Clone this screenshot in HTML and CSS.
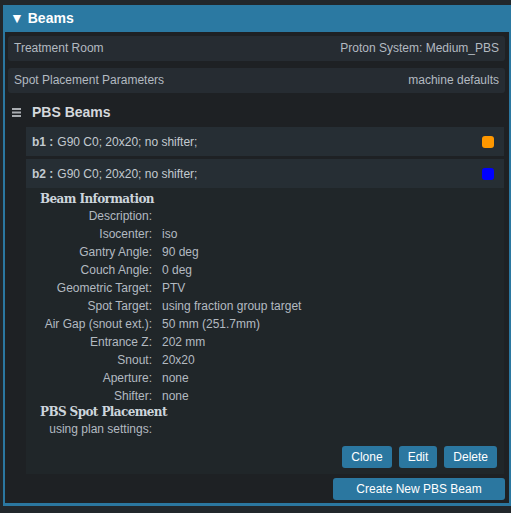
FILE: index.html
```html
<!DOCTYPE html>
<html lang="en">
<head>
    <meta charset="UTF-8">
    <title>Beams</title>
    <link rel="stylesheet" href="styles.css">
</head>
<body>
    <div class="panel">
        <div class="panel-header"><span class="caret">&#9660;</span> Beams</div>
        <div class="panel-body">
            <div class="info-row">
                <span>Treatment Room</span>
                <span>Proton System: Medium_PBS</span>
            </div>
            <div class="info-row">
                <span>Spot Placement Parameters</span>
                <span>machine defaults</span>
            </div>

            <div class="section-title">
                <svg class="menu-icon" width="9" height="9" viewBox="0 0 9 9">
                    <rect x="0" y="0" width="9" height="2" fill="#a9adb1"/>
                    <rect x="0" y="3.5" width="9" height="2" fill="#a9adb1"/>
                    <rect x="0" y="7" width="9" height="2" fill="#a9adb1"/>
                </svg>
                PBS Beams
            </div>

            <div class="beam-list">
                <div class="beam">
                    <span class="beam-id">b1 :</span>
                    <span class="beam-desc">G90 C0; 20x20; no shifter;</span>
                    <span class="swatch orange"></span>
                </div>
                <div class="beam">
                    <span class="beam-id">b2 :</span>
                    <span class="beam-desc">G90 C0; 20x20; no shifter;</span>
                    <span class="swatch blue"></span>
                </div>
                <div class="beam-details">
                    <h4>Beam Information</h4>
                    <div class="props">
                        <span class="label">Description:</span><span></span>
                        <span class="label">Isocenter:</span><span>iso</span>
                        <span class="label">Gantry Angle:</span><span>90 deg</span>
                        <span class="label">Couch Angle:</span><span>0 deg</span>
                        <span class="label">Geometric Target:</span><span>PTV</span>
                        <span class="label">Spot Target:</span><span>using fraction group target</span>
                        <span class="label">Air Gap (snout ext.):</span><span>50 mm (251.7mm)</span>
                        <span class="label">Entrance Z:</span><span>202 mm</span>
                        <span class="label">Snout:</span><span>20x20</span>
                        <span class="label">Aperture:</span><span>none</span>
                        <span class="label">Shifter:</span><span>none</span>
                    </div>
                    <h4>PBS Spot Placement</h4>
                    <div class="props">
                        <span class="label">using plan settings:</span><span></span>
                    </div>
                    <div class="actions">
                        <button>Clone</button>
                        <button>Edit</button>
                        <button>Delete</button>
                    </div>
                </div>
            </div>

            <div class="footer">
                <button class="wide">Create New PBS Beam</button>
            </div>
        </div>
    </div>
</body>
</html>
```

FILE: styles.css
```css
/* Page */
body {
    margin: 0;
    padding-top: 5px;
    background-color: #22272b;
    font-family: 'Liberation Sans', Arial, sans-serif;
    font-size: 12px;
    color: #b3bac1;
}

.panel {
    margin-left: 3px;
    width: 504px;
    border: 2px solid #2b77a0;
    border-top: none;
    border-bottom-width: 3px;
    background-color: #1e2124;
}

.panel-header {
    height: 27px;
    line-height: 27px;
    margin: 0 -2px;
    padding-left: 7px;
    background-color: #2b79a2;
    color: #fff;
    font-size: 14px;
    font-weight: bold;
}

.caret {
    font-size: 14px;
}

.panel-body {
    padding: 4px 4px 3px 3px;
}

/* Summary rows */
.info-row {
    display: flex;
    justify-content: space-between;
    height: 25px;
    line-height: 25px;
    padding: 0 6px;
    margin-bottom: 7px;
    background-color: #262c32;
    border-radius: 3px;
}

.section-title {
    display: flex;
    align-items: center;
    height: 24px;
    padding-left: 4px;
    color: #d4d8dc;
    font-size: 14px;
    font-weight: bold;
}

.menu-icon {
    margin-right: 11px;
}

/* Beam list */
.beam-list {
    margin: 3px 1px 0 18px;
}

.beam {
    display: flex;
    align-items: center;
    height: 29px;
    padding: 0 10px 0 6px;
    margin-bottom: 3px;
    background-color: #262e34;
    color: #c3cad0;
}

.beam-id {
    font-weight: bold;
    margin-right: 4px;
}

.beam-desc {
    flex: 1;
}

.swatch {
    width: 12px;
    height: 12px;
    border-radius: 3px;
}

.swatch.orange {
    background-color: #ff9800;
}

.swatch.blue {
    background-color: #0000ff;
}

.beam-details {
    margin-top: -3px;
    padding: 4px 7px 6px 14px;
    background-color: #202629;
}

.beam-details h4 {
    margin: 0;
    height: 15px;
    line-height: 15px;
    font-family: 'DejaVu Serif', Georgia, serif;
    font-size: 12px;
    font-weight: bold;
    letter-spacing: -0.6px;
    color: #cdd5dc;
}

.props {
    display: grid;
    grid-template-columns: 112px 1fr;
    column-gap: 10px;
    grid-auto-rows: 18px;
    line-height: 18px;
}

.props .label {
    text-align: right;
}

.actions {
    display: flex;
    justify-content: flex-end;
    gap: 7px;
    margin-top: 8px;
}

button {
    height: 22px;
    padding: 0 9px;
    border: none;
    border-radius: 3px;
    background-color: #2b77a0;
    color: #fff;
    font-family: 'Liberation Sans', Arial, sans-serif;
    font-size: 12px;
}

.footer {
    display: flex;
    justify-content: flex-end;
    padding-top: 4px;
}

button.wide {
    width: 172px;
}
```
